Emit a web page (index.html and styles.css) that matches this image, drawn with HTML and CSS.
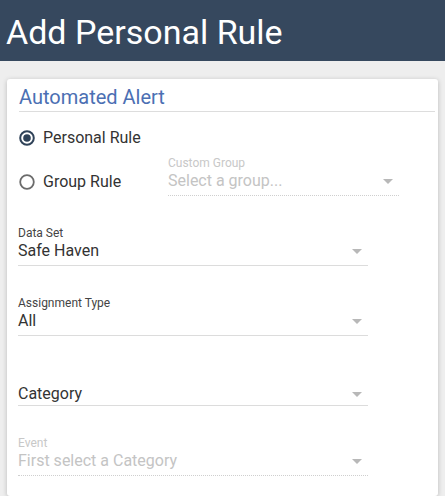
FILE: index.html
```html
<!DOCTYPE html>
<html>
<head>
<meta charset="utf-8">
<link rel="stylesheet" href="styles.css">
</head>
<body>
<header class="topbar">Add Personal Rule</header>
<main class="card">
  <h2 class="card-title">Automated Alert</h2>

  <div class="radio-row">
    <label class="radio">
      <svg class="radio-icon" width="16" height="16" viewBox="0 0 16 16"><circle cx="8" cy="8" r="6.8" fill="none" stroke="#2f4258" stroke-width="2"/><circle cx="8" cy="8" r="3.8" fill="#2f4258"/></svg>
      <span>Personal Rule</span>
    </label>
  </div>

  <div class="group-row">
    <label class="radio radio-offset">
      <svg class="radio-icon" width="16" height="16" viewBox="0 0 16 16"><circle cx="8" cy="8" r="6.8" fill="none" stroke="#6b6b6b" stroke-width="1.8"/></svg>
      <span>Group Rule</span>
    </label>
    <div class="field field-group disabled">
      <div class="field-label">Custom Group</div>
      <div class="field-value"><span>Select a group...</span><i class="caret"></i></div>
    </div>
  </div>

  <div class="field">
    <div class="field-label">Data Set</div>
    <div class="field-value"><span>Safe Haven</span><i class="caret"></i></div>
  </div>

  <div class="field">
    <div class="field-label">Assignment Type</div>
    <div class="field-value"><span>All</span><i class="caret"></i></div>
  </div>

  <div class="field">
    <div class="field-label"></div>
    <div class="field-value placeholder-float"><span>Category</span><i class="caret"></i></div>
  </div>

  <div class="field disabled">
    <div class="field-label">Event</div>
    <div class="field-value"><span>First select a Category</span><i class="caret"></i></div>
  </div>
</main>
</body>
</html>
```

FILE: styles.css
```css
* { box-sizing: border-box; }

html, body {
  margin: 0;
  padding: 0;
  background: #eeeeee;
  font-family: Roboto, "Liberation Sans", sans-serif;
  color: #333;
}

.topbar {
  height: 61px;
  background: #36485e;
  color: #ffffff;
  font-size: 34px;
  line-height: 38px;
  padding: 13px 0 0 6px;
  white-space: nowrap;
}

.card {
  display: block;
  margin: 18px 7px 0 7px;
  background: #ffffff;
  border-radius: 3px;
  box-shadow: 0 1px 5px rgba(0, 0, 0, 0.22);
  padding: 7px 3px 20px 11px;
}

.card-title {
  margin: 0 0 0 1px;
  font-size: 20px;
  font-weight: 400;
  line-height: 22px;
  color: #4b6fb3;
  padding-bottom: 3px;
  border-bottom: 1px solid #dddddd;
}

.radio-row {
  margin-top: 15px;
  padding-left: 1px;
  display: flex;
}

.radio {
  display: flex;
  align-items: center;
  height: 22px;
  font-size: 16px;
  line-height: 22px;
  color: #333;
}

.radio-icon {
  flex: none;
  margin-right: 8px;
}

.group-row {
  margin-top: 7px;
  display: flex;
  align-items: flex-start;
}

.radio-offset {
  width: 150px;
  flex: none;
  margin-top: 15px;
  padding-left: 1px;
}

.field {
  width: 350px;
  margin-top: 30px;
}

.group-row .field-group {
  width: 231px;
  margin-top: 0;
}

.field-label {
  height: 15px;
  font-size: 12px;
  line-height: 15px;
  color: #444;
}

.field-value {
  display: flex;
  align-items: center;
  justify-content: space-between;
  height: 25px;
  font-size: 16px;
  line-height: 20px;
  padding-bottom: 4px;
  color: #333;
  border-bottom: 1px solid #dcdcdc;
}

.field-value.placeholder-float {
  padding-top: 3px;
  padding-bottom: 1px;
}

.caret {
  width: 0;
  height: 0;
  border-left: 5px solid transparent;
  border-right: 5px solid transparent;
  border-top: 5px solid #b8b8b8;
  margin-right: 6px;
}

.disabled .field-label { color: #c8c8c8; }
.disabled .field-value {
  color: #c4c4c4;
  border-bottom: 1px dotted #cfcfcf;
}
```
